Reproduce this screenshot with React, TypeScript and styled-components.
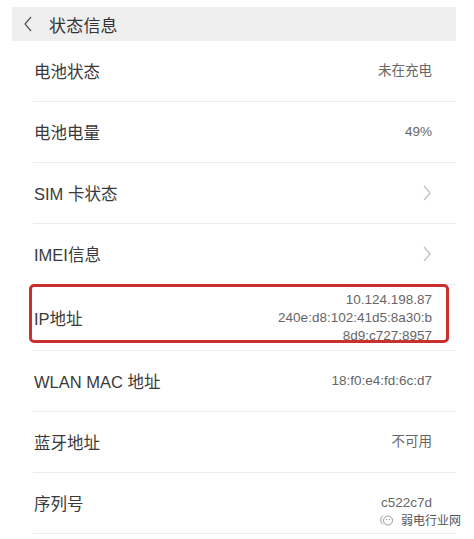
import React from 'react';
import styled, { createGlobalStyle } from 'styled-components';

const GlobalStyle = createGlobalStyle`
  body {
    margin: 0;
    background: #fff;
    font-family: "Liberation Sans", "Noto Sans CJK SC", sans-serif;
  }
`;

const Page = styled.div`
  position: relative;
  width: 474px;
  height: 539px;
  overflow: hidden;
  padding-top: 7px;
  box-sizing: border-box;
`;

const Screen = styled.div`
  margin-left: 12px;
  width: 444px;
`;

const Header = styled.div`
  height: 34px;
  background: #efefef;
  display: flex;
  align-items: center;
  padding-left: 11px;
  gap: 16px;
  color: #333;
`;

const Title = styled.span`
  font-size: 17px;
  font-family: "Noto Sans CJK SC", sans-serif;
  letter-spacing: 0.2px;
`;

const List = styled.div`
  margin-left: 21px;
`;

const Row = styled.div<{ $tall?: boolean }>`
  position: relative;
  height: ${(p) => (p.$tall ? 65 : 60)}px;
  display: flex;
  align-items: center;
  justify-content: space-between;
  padding: 0 24px 0 1px;
  border-bottom: 1px solid #ececec;
`;

const Label = styled.span`
  font-size: 16.5px;
  color: #3a3a3a;
`;

const Value = styled.span`
  font-size: 13.5px;
  color: #666;
  text-align: right;
  line-height: 18px;
`;

const Highlight = styled.div`
  position: absolute;
  left: -4px;
  top: -1px;
  right: 7px;
  bottom: 7px;
  border: 3px solid #c93030;
  border-radius: 5px;
  pointer-events: none;
`;

const Watermark = styled.div`
  position: absolute;
  left: 379px;
  top: 511px;
  display: flex;
  align-items: center;
  gap: 6px;
  font-size: 12px;
  color: #555;
  font-family: "Noto Sans CJK SC", sans-serif;
`;

const Chevron = ({ left }: { left?: boolean }) => (
  <svg width="10" height="16" viewBox="0 0 10 16">
    <path
      d={left ? 'M8 1 L2 8 L8 15' : 'M2 1 L8 8 L2 15'}
      fill="none"
      stroke={left ? '#555' : '#bdbdbd'}
      strokeWidth="1.2"
    />
  </svg>
);

const WeChatIcon = () => (
  <svg width="16" height="14" viewBox="0 0 16 14">
    <path d="M4 2.5 A5.5 5.5 0 0 0 4 11.5" fill="none" stroke="#999" strokeWidth="1" />
    <circle cx="9" cy="7.5" r="4.5" fill="none" stroke="#999" strokeWidth="1" />
    <circle cx="7.5" cy="6.5" r="0.7" fill="#999" />
    <circle cx="10.5" cy="6.5" r="0.7" fill="#999" />
  </svg>
);

const rows: { label: string; value?: string[]; arrow?: boolean; mark?: boolean }[] = [
  { label: '电池状态', value: ['未在充电'] },
  { label: '电池电量', value: ['49%'] },
  { label: 'SIM 卡状态', arrow: true },
  { label: 'IMEI信息', arrow: true },
  { label: 'IP地址', value: ['10.124.198.87', '240e:d8:102:41d5:8a30:b', '8d9:c727:8957'], mark: true },
  { label: 'WLAN MAC 地址', value: ['18:f0:e4:fd:6c:d7'] },
  { label: '蓝牙地址', value: ['不可用'] },
  { label: '序列号', value: ['c522c7d'] },
];

const App: React.FC = () => {
  return (
    <Page>
      <GlobalStyle />
      <Screen>
        <Header>
          <Chevron left />
          <Title>状态信息</Title>
        </Header>
        <List>
          {rows.map((r) => (
            <Row key={r.label} $tall={r.mark}>
              <Label>{r.label}</Label>
              {r.arrow ? (
                <Chevron />
              ) : (
                <Value>
                  {r.value?.map((v) => (
                    <div key={v}>{v}</div>
                  ))}
                </Value>
              )}
              {r.mark && <Highlight />}
            </Row>
          ))}
        </List>
      </Screen>
      <Watermark>
        <WeChatIcon />
        弱电行业网
      </Watermark>
    </Page>
  );
};

export default App;
